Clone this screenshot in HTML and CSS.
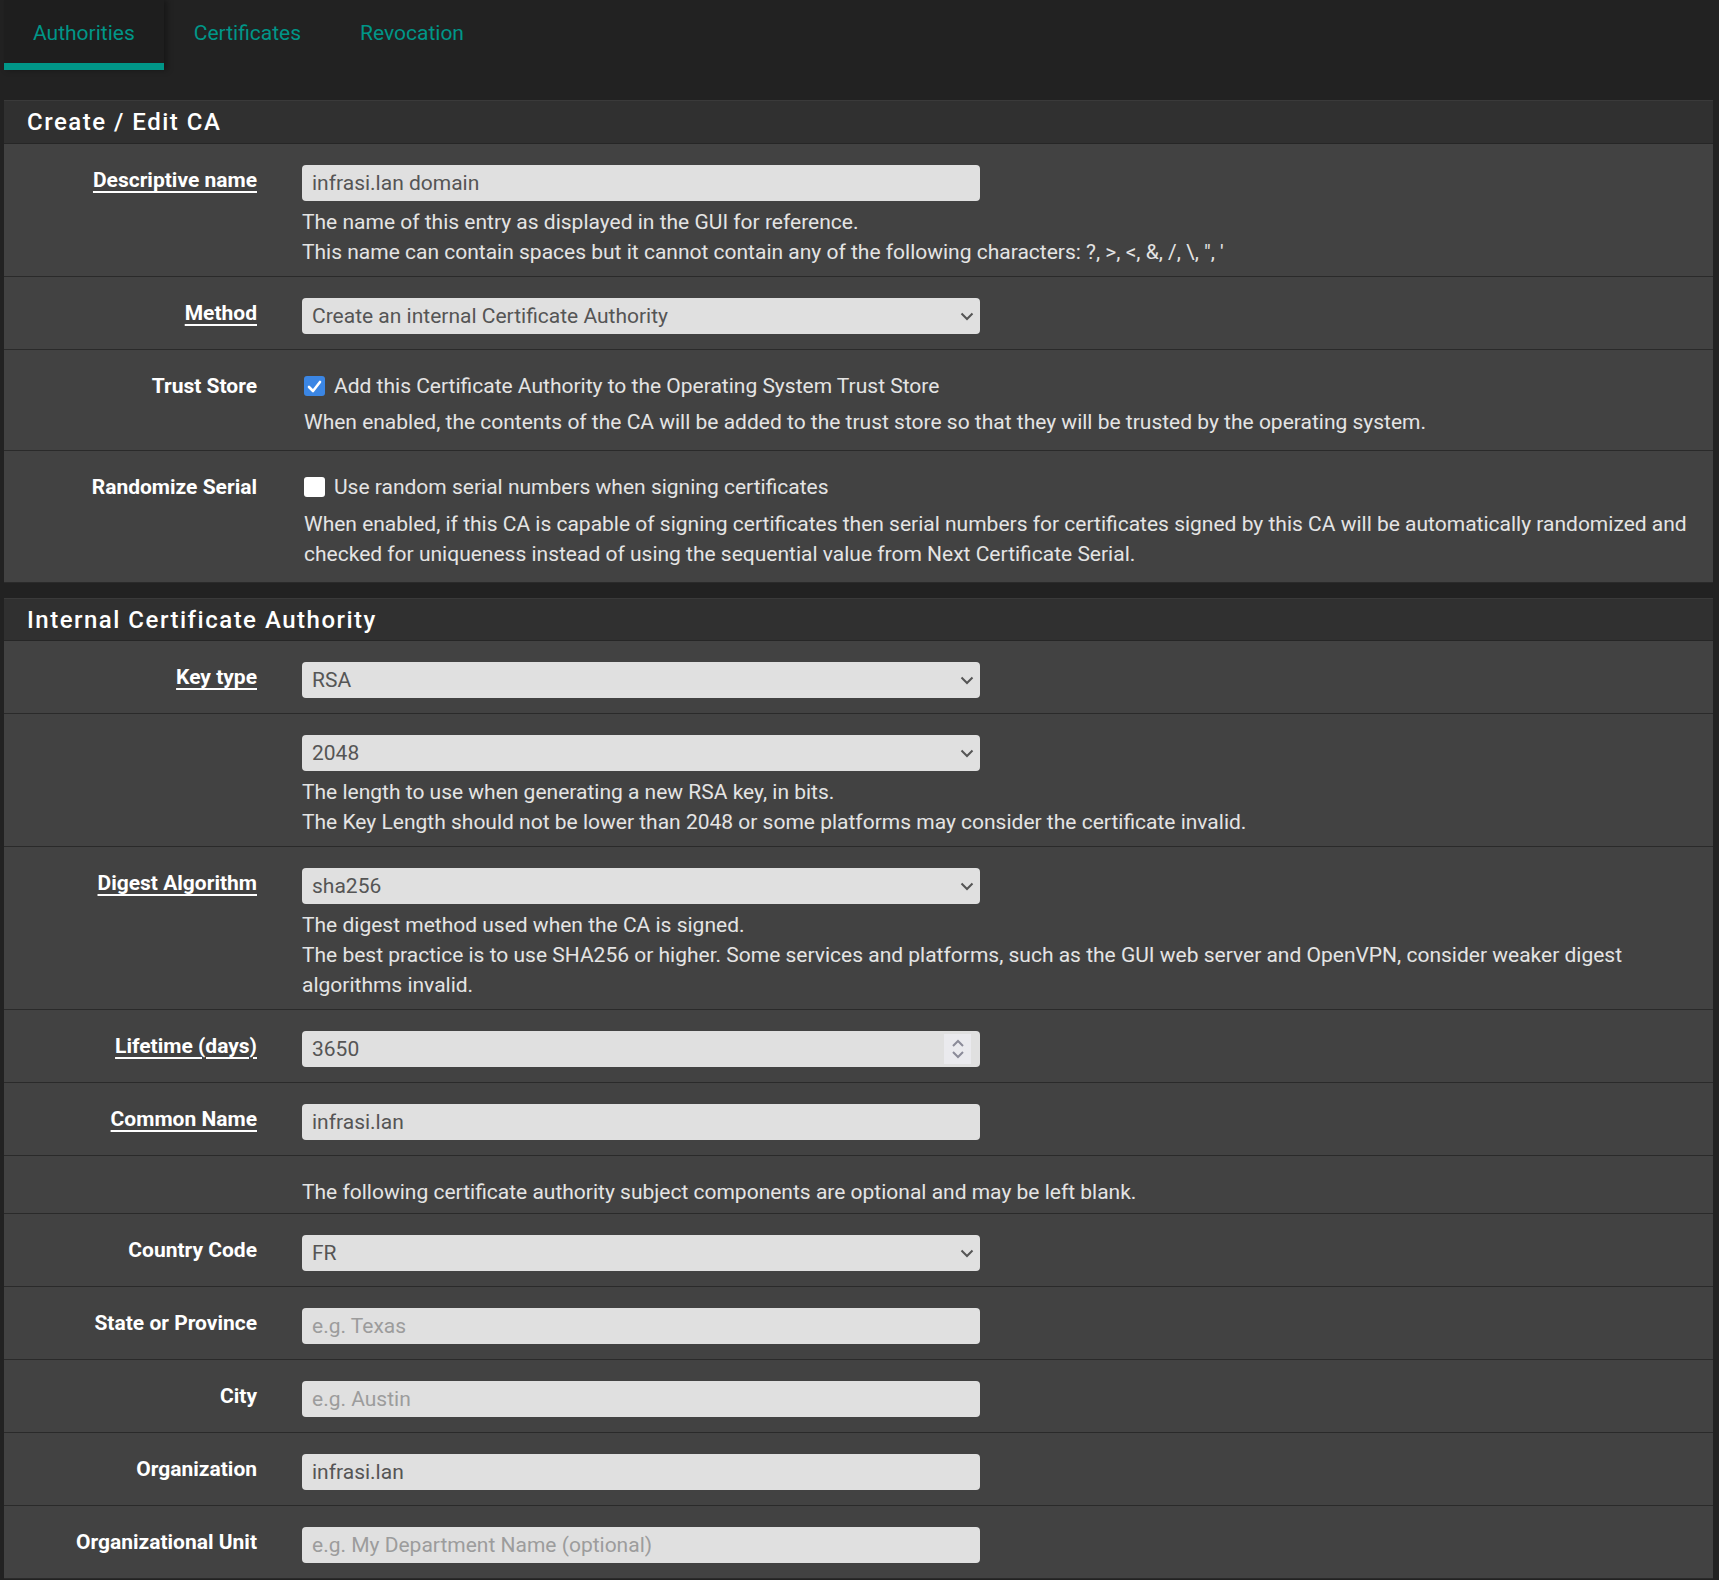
FILE: index.html
```html
<!DOCTYPE html>
<html lang="en">
<head>
<meta charset="utf-8">
<title>Certificate Authorities</title>
<link rel="stylesheet" href="styles.css">
</head>
<body>
<nav class="tabs">
  <a class="tab active" href="#">Authorities</a>
  <a class="tab" href="#">Certificates</a>
  <a class="tab" href="#">Revocation</a>
</nav>
<main class="content">
  <section class="panel">
    <div class="panel-heading"><h2 class="panel-title">Create / Edit CA</h2></div>
    <div class="form-row">
      <label class="form-label"><a href="#">Descriptive name</a></label>
      <div class="form-control">
        <input class="field" type="text" value="infrasi.lan domain">
        <div class="help">The name of this entry as displayed in the GUI for reference.<br>This name can contain spaces but it cannot contain any of the following characters: ?, &gt;, &lt;, &amp;, /, \, ", '</div>
      </div>
    </div>
    <div class="form-row">
      <label class="form-label"><a href="#">Method</a></label>
      <div class="form-control">
        <div class="select-wrap">
          <select class="field"><option>Create an internal Certificate Authority</option></select>
          <svg class="chev" width="14" height="9" viewBox="0 0 14 9"><path d="M1.5 1.5 L7 7 L12.5 1.5" fill="none" stroke="#555" stroke-width="2"/></svg>
        </div>
      </div>
    </div>
    <div class="form-row">
      <label class="form-label">Trust Store</label>
      <div class="form-control">
        <div class="check">
          <span class="box on"><svg width="15" height="13" viewBox="0 0 15 13"><path d="M2 7 L6 11 L13 2" fill="none" stroke="#fff" stroke-width="2.6" stroke-linecap="round" stroke-linejoin="round"/></svg></span>
          <span>Add this Certificate Authority to the Operating System Trust Store</span>
        </div>
        <div class="help cb">When enabled, the contents of the CA will be added to the trust store so that they will be trusted by the operating system.</div>
      </div>
    </div>
    <div class="form-row">
      <label class="form-label">Randomize Serial</label>
      <div class="form-control">
        <div class="check">
          <span class="box"></span>
          <span>Use random serial numbers when signing certificates</span>
        </div>
        <div class="help cb cb-long">When enabled, if this CA is capable of signing certificates then serial numbers for certificates signed by this CA will be automatically randomized and checked for uniqueness instead of using the sequential value from Next Certificate Serial.</div>
      </div>
    </div>
  </section>

  <section class="panel">
    <div class="panel-heading"><h2 class="panel-title">Internal Certificate Authority</h2></div>
    <div class="form-row">
      <label class="form-label"><a href="#">Key type</a></label>
      <div class="form-control">
        <div class="select-wrap">
          <select class="field"><option>RSA</option></select>
          <svg class="chev" width="14" height="9" viewBox="0 0 14 9"><path d="M1.5 1.5 L7 7 L12.5 1.5" fill="none" stroke="#555" stroke-width="2"/></svg>
        </div>
      </div>
    </div>
    <div class="form-row">
      <div class="form-label"></div>
      <div class="form-control">
        <div class="select-wrap">
          <select class="field"><option>2048</option></select>
          <svg class="chev" width="14" height="9" viewBox="0 0 14 9"><path d="M1.5 1.5 L7 7 L12.5 1.5" fill="none" stroke="#555" stroke-width="2"/></svg>
        </div>
        <div class="help">The length to use when generating a new RSA key, in bits.<br>The Key Length should not be lower than 2048 or some platforms may consider the certificate invalid.</div>
      </div>
    </div>
    <div class="form-row">
      <label class="form-label"><a href="#">Digest Algorithm</a></label>
      <div class="form-control">
        <div class="select-wrap">
          <select class="field"><option>sha256</option></select>
          <svg class="chev" width="14" height="9" viewBox="0 0 14 9"><path d="M1.5 1.5 L7 7 L12.5 1.5" fill="none" stroke="#555" stroke-width="2"/></svg>
        </div>
        <div class="help">The digest method used when the CA is signed.<br>The best practice is to use SHA256 or higher. Some services and platforms, such as the GUI web server and OpenVPN, consider weaker digest algorithms invalid.</div>
      </div>
    </div>
    <div class="form-row">
      <label class="form-label"><a href="#">Lifetime (days)</a></label>
      <div class="form-control">
        <div class="num-wrap">
          <input class="field" type="text" value="3650">
          <span class="spin"><svg width="14" height="22" viewBox="0 0 14 22"><path d="M2 8 L7 3 L12 8 M2 14 L7 19 L12 14" fill="none" stroke="#8b8b99" stroke-width="2"/></svg></span>
        </div>
      </div>
    </div>
    <div class="form-row">
      <label class="form-label"><a href="#">Common Name</a></label>
      <div class="form-control">
        <input class="field" type="text" value="infrasi.lan">
      </div>
    </div>
    <div class="form-row">
      <div class="form-label"></div>
      <div class="form-control">
        <div class="help note">The following certificate authority subject components are optional and may be left blank.</div>
      </div>
    </div>
    <div class="form-row">
      <label class="form-label">Country Code</label>
      <div class="form-control">
        <div class="select-wrap">
          <select class="field"><option>FR</option></select>
          <svg class="chev" width="14" height="9" viewBox="0 0 14 9"><path d="M1.5 1.5 L7 7 L12.5 1.5" fill="none" stroke="#555" stroke-width="2"/></svg>
        </div>
      </div>
    </div>
    <div class="form-row">
      <label class="form-label">State or Province</label>
      <div class="form-control">
        <input class="field" type="text" placeholder="e.g. Texas">
      </div>
    </div>
    <div class="form-row">
      <label class="form-label">City</label>
      <div class="form-control">
        <input class="field" type="text" placeholder="e.g. Austin">
      </div>
    </div>
    <div class="form-row">
      <label class="form-label">Organization</label>
      <div class="form-control">
        <input class="field" type="text" value="infrasi.lan">
      </div>
    </div>
    <div class="form-row">
      <label class="form-label">Organizational Unit</label>
      <div class="form-control">
        <input class="field" type="text" placeholder="e.g. My Department Name (optional)">
      </div>
    </div>
  </section>
</main>
</body>
</html>
```

FILE: styles.css
```css
* { box-sizing: border-box; }

body {
  margin: 0;
  background: #222222;
  font-family: Roboto, "Liberation Sans", sans-serif;
  font-size: 21px;
  color: #e4e4e4;
}

.tabs {
  display: flex;
  padding-left: 4px;
  height: 70px;
}

.tab {
  padding: 18px 29px 15px;
  line-height: 30px;
  color: #009688;
  text-decoration: none;
  border-bottom: 7px solid transparent;
}

.tab + .tab {
  margin-left: 1px;
}

.tab.active {
  border-bottom-color: #009688;
  background: #1e1e1e;
  box-shadow: 3px 0 6px rgba(0, 0, 0, 0.35);
}

.content {
  padding: 30px 6px 0 4px;
}

.panel {
  background: #424242;
  margin-bottom: 15px;
}

.panel-heading {
  height: 43px;
  background: #303030;
  border-top: 1px solid #3a3a3a;
  border-bottom: 1px solid #262626;
  padding: 0 23px;
  display: flex;
  align-items: center;
}

.panel:first-of-type .panel-heading {
  height: 44px;
}

.panel-title {
  margin: 0;
  font-size: 24px;
  font-weight: 500;
  letter-spacing: 1.5px;
  color: #ffffff;
}

.form-row {
  display: grid;
  grid-template-columns: 253px 1fr;
  column-gap: 45px;
  padding: 21px 23px 15px 0;
  border-bottom: 1px solid #2a2a2a;
}

.form-label {
  text-align: right;
  font-weight: 700;
  color: #ffffff;
  line-height: 30px;
  padding-top: 0;
}

.form-label a {
  color: #ffffff;
  text-decoration: underline;
  text-decoration-thickness: 2px;
  text-underline-offset: 4px;
}

.field {
  display: block;
  width: 678px;
  height: 36px;
  border: none;
  border-radius: 4px;
  background: #e0e0e0;
  color: #555555;
  font-family: Roboto, "Liberation Sans", sans-serif;
  font-size: 21px;
  padding: 0 10px;
  margin: 0;
  outline: none;
  appearance: none;
  -webkit-appearance: none;
}

.field::placeholder {
  color: #9c9c9c;
}

.select-wrap,
.num-wrap {
  position: relative;
  width: 678px;
}

.chev {
  position: absolute;
  right: 6px;
  top: 14px;
  pointer-events: none;
}

.spin {
  position: absolute;
  right: 9px;
  top: 3px;
  width: 27px;
  height: 30px;
  background: #eaeaee;
  display: flex;
  align-items: center;
  justify-content: center;
}

.check {
  display: flex;
  align-items: center;
  gap: 9px;
  line-height: 30px;
  padding-left: 2px;
}

.box {
  width: 21px;
  height: 20px;
  border-radius: 3px;
  background: #ffffff;
  display: flex;
  align-items: center;
  justify-content: center;
  flex: none;
}

.box.on {
  background: #3b86e4;
}

.help {
  margin: 6px 0 -6px;
  line-height: 30px;
}

.help.cb {
  margin: 6px 0 -2px;
  padding-left: 2px;
}

.help.cb-long {
  margin-top: 7px;
}

.help.note {
  margin: 0 0 -9px;
}
```
